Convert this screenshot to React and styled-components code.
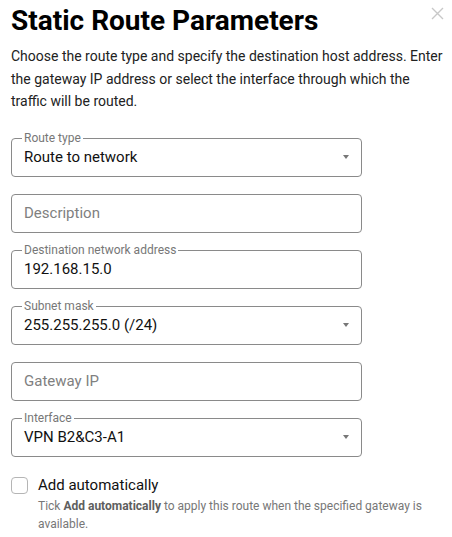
import React from "react";
import styled, { createGlobalStyle } from "styled-components";

const Global = createGlobalStyle`
  html, body { margin: 0; padding: 0; background: #fff; }
  body { font-family: Roboto, "Noto Sans", Arial, sans-serif; color: #1f1f1f; }
  * { box-sizing: border-box; }
`;

const Dialog = styled.div`
  position: relative;
  width: 452px;
  padding: 4px 11px 0 11px;
`;

const Title = styled.h1`
  margin: 0;
  font-size: 28px;
  line-height: 34px;
  font-weight: 700;
  color: #000;
`;

const Close = styled.button`
  position: absolute;
  top: 6px;
  right: 8px;
  width: 14px;
  height: 14px;
  padding: 0;
  border: 0;
  background: none;
  display: flex;
  align-items: center;
  justify-content: center;
`;

const Intro = styled.p`
  margin: 7px -8px 0 0;
  font-size: 14px;
  line-height: 22.5px;
  color: #222;
`;

const Form = styled.div`
  margin-top: 25px;
  width: 351px;
  display: flex;
  flex-direction: column;
  gap: 17px;
`;

const Field = styled.div`
  position: relative;
  height: 39px;
  padding: 0 12px;
  border: 1px solid #8a8a8a;
  border-radius: 4px;
  display: flex;
  align-items: center;
`;

const Legend = styled.span`
  position: absolute;
  top: -8px;
  left: 10px;
  padding: 0 2px;
  background: #fff;
  font-size: 12px;
  line-height: 14px;
  color: #777;
`;

const Value = styled.span`
  flex: 1;
  font-size: 15px;
  line-height: 18px;
  color: ${(p) => (p.$placeholder ? "#808080" : "#111")};
`;

const Caret = styled.span`
  width: 0;
  height: 0;
  border-left: 3.5px solid transparent;
  border-right: 3.5px solid transparent;
  border-top: 4px solid #777;
`;

const CheckRow = styled.div`
  margin-top: 19px;
  display: grid;
  grid-template-columns: 17px 1fr;
  column-gap: 10px;
  align-items: start;
`;

const Box = styled.span`
  width: 17px;
  height: 17px;
  border: 1px solid #b5b5b5;
  border-radius: 4px;
  margin-top: 1px;
`;

const CheckLabel = styled.div`
  font-size: 15px;
  line-height: 19px;
  color: #111;
`;

const Hint = styled.div`
  grid-column: 2;
  margin-top: 2px;
  font-size: 12px;
  line-height: 18px;
  color: #777;
  b { font-weight: 700; color: #5e5e5e; }
`;

function SelectField({ label, value }) {
  return (
    <Field>
      <Legend>{label}</Legend>
      <Value>{value}</Value>
      <Caret />
    </Field>
  );
}

function TextField({ label, value, placeholder }) {
  return (
    <Field>
      {label && <Legend>{label}</Legend>}
      {placeholder ? <Value $placeholder>{placeholder}</Value> : <Value>{value}</Value>}
    </Field>
  );
}

export default function App() {
  return (
    <>
      <Global />
      <Dialog>
        <Title>Static Route Parameters</Title>
        <Close aria-label="Close">
          <svg width="13" height="13" viewBox="0 0 13 13">
            <path d="M1 1L12 12M12 1L1 12" stroke="#c8c8c8" strokeWidth="1.4" />
          </svg>
        </Close>
        <Intro>
          Choose the route type and specify the destination host address. Enter the gateway IP address or select the interface through which the traffic will be routed.
        </Intro>
        <Form>
          <SelectField label="Route type" value="Route to network" />
          <TextField placeholder="Description" />
          <TextField label="Destination network address" value="192.168.15.0" />
          <SelectField label="Subnet mask" value="255.255.255.0 (/24)" />
          <TextField placeholder="Gateway IP" />
          <SelectField label="Interface" value="VPN B2&C3-A1" />
        </Form>
        <CheckRow>
          <Box />
          <CheckLabel>Add automatically</CheckLabel>
          <Hint>
            Tick <b>Add automatically</b> to apply this route when the specified gateway is available.
          </Hint>
        </CheckRow>
      </Dialog>
    </>
  );
}
